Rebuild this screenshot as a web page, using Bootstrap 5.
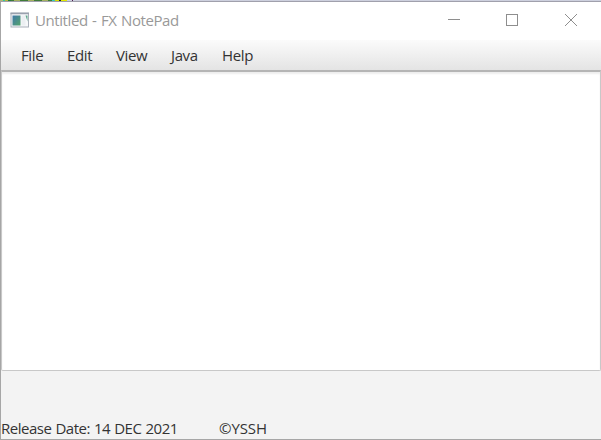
<!DOCTYPE html>
<html lang="en">
<head>
<meta charset="utf-8">
<title>Untitled - FX NotePad</title>
<link href="https://cdn.jsdelivr.net/npm/bootstrap@5.3.0/dist/css/bootstrap.min.css" rel="stylesheet">
<style>
html, body { height: 100%; overflow: hidden; }
body { font-family: "Open Sans", "Noto Sans", sans-serif; font-size: 15px; line-height: 20px; color: #333; background: #f3f3f3; letter-spacing: -.48px; word-spacing: .6px; }
.backdrop { height: 1px; flex: none; background: linear-gradient(90deg, #b5b878 0 3px, #35c9a0 3px 5px, #b5b83c 5px 8px, #267a40 8px 11px, transparent 11px 52px, #35c9c0 52px 55px, #d8e000 55px 59px, #222 59px 61px, #e4ec00 61px 67px, #cdd0de 67px 72px, #502050 72px 73px, #cdd0de 73px), repeating-linear-gradient(90deg, #a5b060 0 6px, #3f7b38 6px 14px); }
.window { border: 1px solid #a6a6a6; border-right: 0; border-top-color: #a0a0ac; min-height: 0; }
.title-bar { height: 38px; background: #fff; color: #999; padding: 0 0 2px 9px; flex: none; }
.title-text { margin-left: 5px; letter-spacing: -.42px; word-spacing: 1px; }
.menu-bar { height: 30px; background: linear-gradient(#fbfbfb, #e4e4e4); padding-left: 20px; flex: none; letter-spacing: -.38px; }
.menu-bar .nav-link { color: #333; padding: 0; flex: none; }
.m-file { width: 46px; } .m-edit { width: 49px; } .m-view { width: 55px; } .m-java { width: 51px; }
.editor { height: 301px; flex: none; resize: none; background: #fff; border: 1px solid #c8c8c8; border-top: 2px solid #b5b5b5; border-radius: 0 0 2px 2px; box-shadow: inset 0 2px 2px #eee; outline: 0; }
.status-bar { padding-bottom: 1px; }
.release { width: 218px; flex: none; }
.author { letter-spacing: -.1px; }
</style>
<script src="https://cdn.jsdelivr.net/npm/bootstrap@5.3.0/dist/js/bootstrap.bundle.min.js"></script>
</head>
<body class="d-flex flex-column m-0">
<div class="backdrop"></div>
<main class="window d-flex flex-column flex-grow-1">
  <header class="title-bar d-flex align-items-center">
    <svg width="20" height="16" viewBox="0 0 20 16" class="flex-shrink-0">
      <defs><linearGradient id="pane" x2="1" y2="1"><stop stop-color="#3f78a8"/><stop offset="1" stop-color="#54a46c"/></linearGradient></defs>
      <rect x="1" y="1" width="17.5" height="14" fill="#f7f8fa" stroke="#a9b0ba"/>
      <path d="M.5 1.5h18.5" stroke="#9aa1ae" stroke-width="1.5"/>
      <rect x="2.500" y="3.500" width="8" height="10" fill="url(#pane)"/>
      <rect x="11.500" y="3.500" width="4" height="10" fill="#eceff2"/>
      <path d="M15.500 3.500h2v6z" fill="#5fa88c"/>
    </svg>
    <span class="title-text">Untitled - FX NotePad</span>
    <svg class="ms-auto flex-shrink-0 align-self-start" width="153" height="38" viewBox="0 0 153 38" fill="none" stroke="#8e8e8e">
      <path d="M0 17.500h12M58.500 12.500h11v11h-11z" shape-rendering="crispEdges"/>
      <path d="M117 12l12 12M129 12l-12 12"/>
    </svg>
  </header>
  <nav class="menu-bar nav flex-nowrap align-items-center">
    <a class="nav-link m-file" href="#">File</a>
    <a class="nav-link m-edit" href="#">Edit</a>
    <a class="nav-link m-view" href="#">View</a>
    <a class="nav-link m-java" href="#">Java</a>
    <a class="nav-link" href="#">Help</a>
  </nav>
  <textarea class="editor w-100" aria-label="Document"></textarea>
  <footer class="status-bar d-flex mt-auto">
    <span class="release">Release Date: 14 DEC 2021</span>
    <span class="author">©YSSH</span>
  </footer>
</main>
</body>
</html>
